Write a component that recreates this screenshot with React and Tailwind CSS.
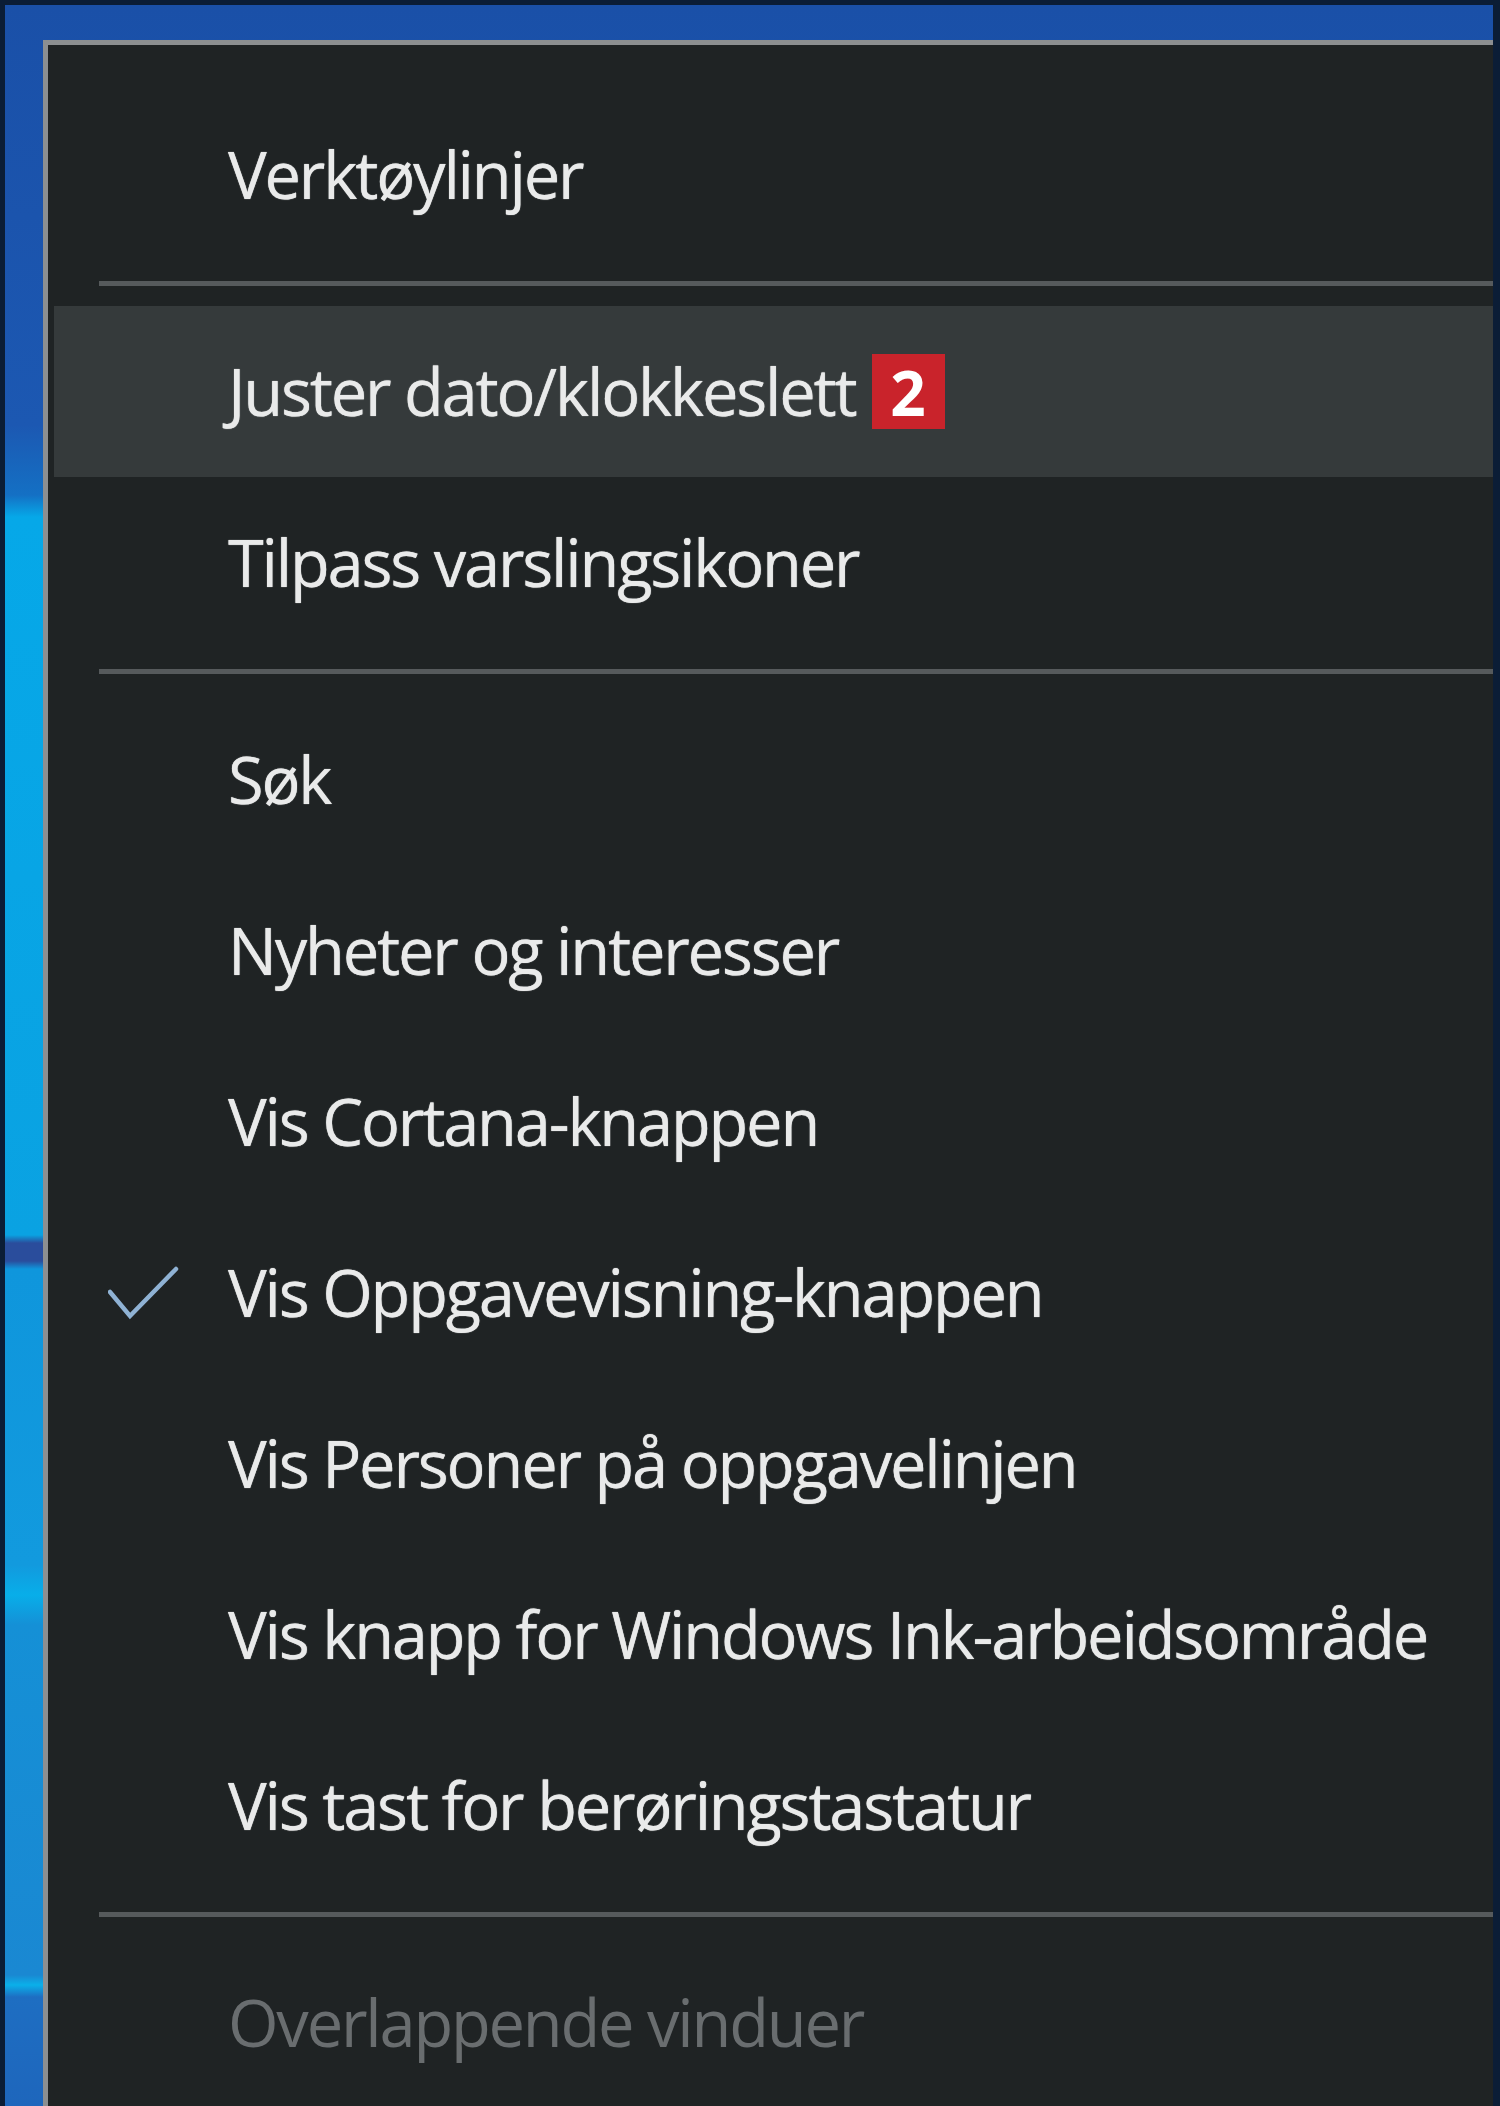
import React from 'react';

const menuFont = { fontFamily: '"Open Sans", "Noto Sans", sans-serif' };

const Separator = () => (
    <div className="h-[46px] flex items-center pl-[51px]">
        <div className="h-[5px] flex-1 bg-[#565a5c]" />
    </div>
);

const CheckMark = () => (
    <svg width="72" height="54" viewBox="0 0 72 54" className="ml-[60px]">
        <polyline
            points="2,26 22,50 68,3"
            fill="none"
            stroke="#8fb2d4"
            strokeWidth="4.5"
            strokeLinecap="round"
            strokeLinejoin="miter"
        />
    </svg>
);

const MenuItem = ({ label, checked, active, disabled, badge }) => (
    <div
        className={`h-[171px] flex items-center ${
            active ? 'bg-[#353a3b] ml-[6px]' : ''
        }`}
    >
        <div className={`${active ? 'w-[174px]' : 'w-[180px]'} shrink-0 flex items-center`}>
            {checked && <CheckMark />}
        </div>
        <span
            className={`text-[65px] leading-none whitespace-nowrap tracking-[-2.2px] ${
                disabled
                    ? 'text-[#696d6f]'
                    : 'text-[#e9eaea] [text-shadow:0_0_1px_#e9eaea]'
            }`}
        >
            {label}
        </span>
        {badge && (
            <span className="ml-[16px] w-[73px] h-[75px] bg-[#c9232b] flex items-center justify-center text-white text-[62px] font-bold leading-none">
                {badge}
            </span>
        )}
    </div>
);

const App = () => {
    return (
        <div
            className="w-[1500px] h-[2106px] flex flex-col overflow-hidden bg-[#0f1416]"
            style={menuFont}
        >
            {/* desktop + context menu */}
            <div className="flex-1 flex flex-col pt-[5px] pl-[5px] pr-[7px] bg-[#0b1d36]">
                <div className="flex-1 flex pl-[38px] pt-[35px] bg-[linear-gradient(to_bottom,#1a50a8_0px,#1c58b2_420px,#1470c4_490px,#06a8e8_512px,#0aa2e2_1230px,#2a4d9c_1238px,#2a4d9c_1256px,#0f96dc_1264px,#129ade_1560px,#08aee9_1590px,#1590d6_1620px,#1a88d2_1970px,#0ab0ea_1980px,#1e6ec2_1992px,#1e66bc_2100px)]">
                    <div className="flex-1 flex flex-col pt-[44px] bg-[#1f2324] border-t-[5px] border-l-[5px] border-[#8c8f91] overflow-hidden">
                        <MenuItem label="Verktøylinjer" />
                        <Separator />
                        <MenuItem label="Juster dato/klokkeslett" active badge="2" />
                        <MenuItem label="Tilpass varslingsikoner" />
                        <Separator />
                        <MenuItem label="Søk" />
                        <MenuItem label="Nyheter og interesser" />
                        <MenuItem label="Vis Cortana-knappen" />
                        <MenuItem label="Vis Oppgavevisning-knappen" checked />
                        <MenuItem label="Vis Personer på oppgavelinjen" />
                        <MenuItem label="Vis knapp for Windows Ink-arbeidsområde" />
                        <MenuItem label="Vis tast for berøringstastatur" />
                        <Separator />
                        <MenuItem label="Overlappende vinduer" disabled />
                    </div>
                </div>
            </div>
            <div className="h-[3px] bg-[#070909]" />
            <div className="h-[6px] bg-[#9a9c9d]" />
        </div>
    );
};

export default App;
